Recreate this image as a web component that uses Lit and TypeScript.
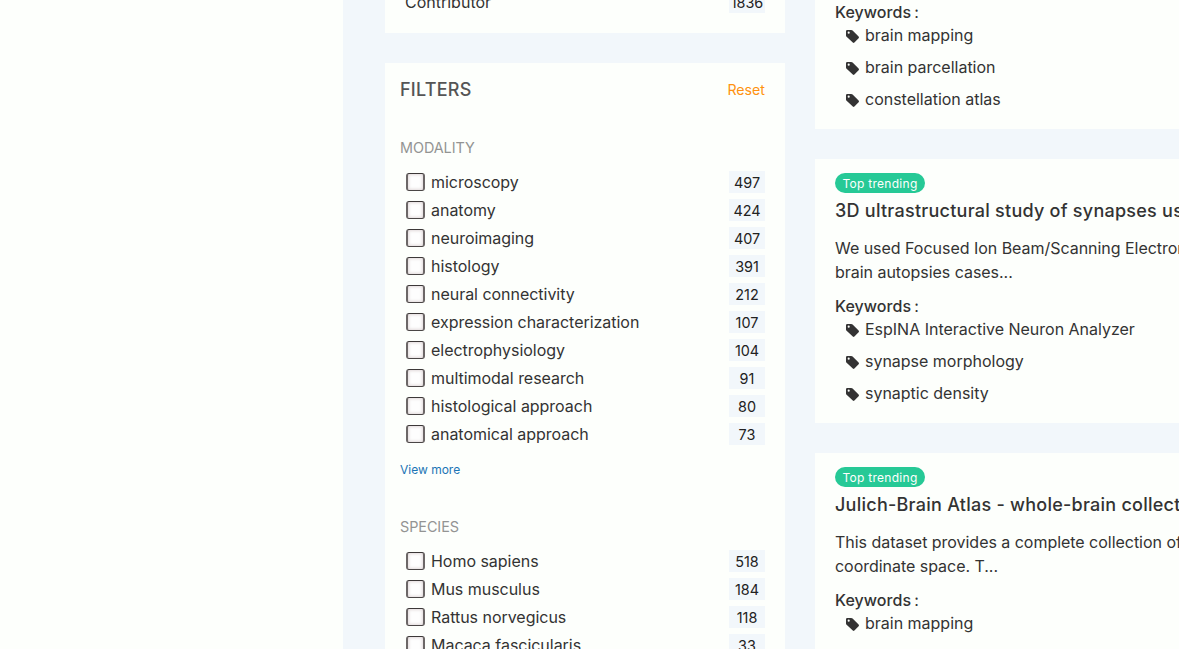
import { LitElement, html, css } from 'lit';
import { customElement, property } from 'lit/decorators.js';

type Facet = [string, number];

const MODALITY: Facet[] = [
  ['microscopy', 497],
  ['anatomy', 424],
  ['neuroimaging', 407],
  ['histology', 391],
  ['neural connectivity', 212],
  ['expression characterization', 107],
  ['electrophysiology', 104],
  ['multimodal research', 91],
  ['histological approach', 80],
  ['anatomical approach', 73],
];

const SPECIES: Facet[] = [
  ['Homo sapiens', 518],
  ['Mus musculus', 184],
  ['Rattus norvegicus', 118],
  ['Macaca fascicularis', 33],
];

@customElement('facet-group')
class FacetGroup extends LitElement {
  @property() heading = '';
  @property({ attribute: false }) items: Facet[] = [];

  static styles = css`
    :host { display: block; }
    .heading {
      font-size: 14.4px;
      line-height: 20px;
      letter-spacing: -0.06px;
      color: #939493;
    }
    .rows {
      display: flex;
      flex-direction: column;
      gap: 6px;
      margin-top: 13px;
    }
    .row {
      display: flex;
      align-items: center;
      height: 22px;
      padding-left: 6px;
    }
    .box {
      box-sizing: border-box;
      width: 19px;
      height: 18px;
      border: 2px solid #6c6767;
      border-top: 1px solid #3c3838;
      border-bottom: 1px solid #4a4646;
      border-radius: 3px;
      background: #fefefe;
      box-shadow: inset 0 0 3px 1px #e2dadb;
    }
    .name { flex: 1; margin-left: 6px; letter-spacing: -0.03px; }
    .count {
      box-sizing: border-box;
      width: 36px;
      height: 22px;
      padding-top: 1px;
      line-height: 22px;
      background: #f2f7fb;
      color: #222;
      text-align: center;
      font-size: 14.4px;
    }
  `;

  render() {
    return html`
      <div class="heading">${this.heading}</div>
      <div class="rows">
        ${this.items.map(
          ([name, count]) => html`
            <div class="row">
              <span class="box"></span>
              <span class="name">${name}</span>
              <span class="count">${count}</span>
            </div>
          `,
        )}
      </div>
    `;
  }
}

@customElement('result-card')
class ResultCard extends LitElement {
  @property({ type: Boolean }) trending = false;
  @property() heading = '';
  @property({ attribute: false }) lines: string[] = [];
  @property({ attribute: false }) keywords: string[] = [];

  static styles = css`
    :host {
      display: block;
      flex: none;
      box-sizing: border-box;
      padding: 14px 20px 10px;
      background: #fdfffc;
      white-space: nowrap;
    }
    .badge {
      display: block;
      box-sizing: border-box;
      width: 90px;
      height: 20px;
      padding-top: 1px;
      border-radius: 10px;
      background: #26c996;
      color: #fefffd;
      font-size: 12px;
      line-height: 20px;
      letter-spacing: 0.28px;
      text-align: center;
    }
    .title {
      margin-top: 4px;
      font-size: 18px;
      font-weight: 500;
      line-height: 27px;
      letter-spacing: 0.25px;
    }
    .text { margin-top: 12px; line-height: 24px; letter-spacing: -0.03px; }
    .label {
      display: flex;
      gap: 3px;
      margin-top: 10px;
      line-height: 24px;
    }
    .label:first-child { margin-top: 0; }
    .label b { font-weight: 500; letter-spacing: 0.05px; }
    .keyword {
      display: flex;
      align-items: center;
      height: 24px;
      margin: 0 0 8px 11px;
      letter-spacing: -0.01px;
    }
    .label + .keyword { margin-top: -1px; }
    .tag {
      width: 13px;
      height: 13px;
      margin: 2px 6px 0 0;
      fill: #333;
    }
  `;

  render() {
    return html`
      ${this.trending
        ? html`
            <span class="badge">Top trending</span>
            <div class="title">${this.heading}</div>
            <div class="text">${this.lines.map((l) => html`<div>${l}</div>`)}</div>
          `
        : ''}
      <div class="label"><b>Keywords</b><span>:</span></div>
      ${this.keywords.map(
        (k) => html`
          <div class="keyword">
            <svg class="tag" viewBox="0 0 13 13">
              <path fill-rule="evenodd" d="M0 1.2Q0 0 1.2 0H5.2Q6 0 6.6 .6L12.6 6.6Q13.3 7.4 12.6 8.2L8.4 12.5Q7.6 13.3 6.8 12.5L.6 6.8Q0 6.2 0 5.4ZM2.7 1.6A1.05 1.05 0 1 0 2.7 3.7A1.05 1.05 0 1 0 2.7 1.6Z"/>
            </svg>
            <span>${k}</span>
          </div>
        `,
      )}
    `;
  }
}

@customElement('app-root')
class AppRoot extends LitElement {
  static styles = css`
    :host {
      display: flex;
      box-sizing: border-box;
      width: 100%;
      height: 649px;
      overflow: hidden;
      background: #fdfffc;
      color: #333;
      font: 16px/24px Inter, sans-serif;
    }
    .side { flex: 0 0 343px; }
    .main {
      flex: 1;
      min-width: 0;
      display: grid;
      grid-template-columns: 400px minmax(0, 1fr);
      column-gap: 30px;
      padding-left: 42px;
      background: #f2f7fb;
      overflow: hidden;
    }
    .column {
      display: flex;
      flex-direction: column;
      gap: 30px;
      height: 649px;
      overflow: hidden;
    }
    .panel {
      flex: none;
      box-sizing: border-box;
      padding: 15px 20px 20px 15px;
      background: #fdfffc;
    }
    .types {
      display: flex;
      justify-content: space-between;
      align-items: flex-end;
      height: 33px;
      padding: 0 20px;
    }
    .types span { line-height: 22px; margin-bottom: 20px; }
    .types .count {
      box-sizing: border-box;
      width: 36px;
      height: 22px;
      padding-top: 1px;
      background: #f2f7fb;
      color: #222;
      text-align: center;
      font-size: 14.4px;
    }
    .top {
      display: flex;
      justify-content: space-between;
      align-items: center;
      height: 24px;
      margin-bottom: 36px;
    }
    .top .title { font-size: 18px; font-weight: 500; letter-spacing: 0.25px; color: #555; }
    .reset { font-size: 14.2px; color: #ff9210; }
    .more {
      margin: 15px 0 37px;
      color: #1c75b5;
      font-size: 12px;
      line-height: 20px;
    }
    .first { height: 129px; padding-top: 0; }
    .last { height: 264px; }
  `;

  render() {
    return html`
      <div class="side"></div>
      <div class="main">
        <div class="column">
          <div class="panel types"><span>Contributor</span><span class="count">1836</span></div>
          <div class="panel">
            <div class="top"><span class="title">FILTERS</span><span class="reset">Reset</span></div>
            <facet-group heading="MODALITY" .items=${MODALITY}></facet-group>
            <div class="more">View more</div>
            <facet-group heading="SPECIES" .items=${SPECIES}></facet-group>
          </div>
        </div>
        <div class="column">
          <result-card
            class="first"
            .keywords=${['brain mapping', 'brain parcellation', 'constellation atlas']}
          ></result-card>
          <result-card
            trending
            heading="3D ultrastructural study of synapses using"
            .lines=${['We used Focused Ion Beam/Scanning Electron', 'brain autopsies cases...']}
            .keywords=${['EspINA Interactive Neuron Analyzer', 'synapse morphology', 'synaptic density']}
          ></result-card>
          <result-card
            class="last"
            trending
            heading="Julich-Brain Atlas - whole-brain collections"
            .lines=${['This dataset provides a complete collection of', 'coordinate space. T...']}
            .keywords=${['brain mapping']}
          ></result-card>
        </div>
      </div>
    `;
  }
}
